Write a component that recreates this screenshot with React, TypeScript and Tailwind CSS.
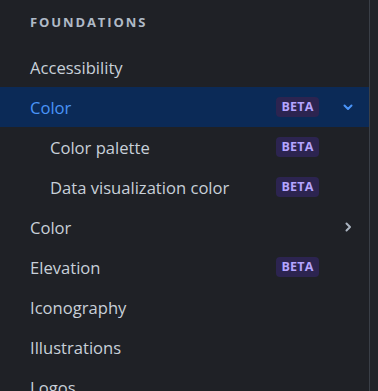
import React from "react";

const Beta = () => (
  <span className="inline-flex items-center justify-center h-[20px] w-[43px] rounded-[4px] bg-[#2c2450] text-[#b4a4ff] text-[12.5px] font-bold leading-none tracking-[0.2px]">
    BETA
  </span>
);

const ChevronDown = ({ color }: { color: string }) => (
  <svg width="12" height="12" viewBox="0 0 12 12" fill="none">
    <path d="M2.5 4.5 L6 8 L9.5 4.5" stroke={color} strokeWidth="2" strokeLinecap="round" strokeLinejoin="round" />
  </svg>
);

const ChevronRight = ({ color }: { color: string }) => (
  <svg width="12" height="12" viewBox="0 0 12 12" fill="none">
    <path d="M4.5 2.5 L8 6 L4.5 9.5" stroke={color} strokeWidth="2" strokeLinecap="round" strokeLinejoin="round" />
  </svg>
);

type Item = {
  label: string;
  beta?: boolean;
  indent?: boolean;
  selected?: boolean;
  chevron?: "down" | "right";
};

const items: Item[] = [
  { label: "Accessibility" },
  { label: "Color", beta: true, selected: true, chevron: "down" },
  { label: "Color palette", beta: true, indent: true },
  { label: "Data visualization color", beta: true, indent: true },
  { label: "Color", chevron: "right" },
  { label: "Elevation", beta: true },
  { label: "Iconography" },
  { label: "Illustrations" },
  { label: "Logos" },
];

export default function App() {
  return (
    <div
      className="w-[378px] h-[391px] overflow-hidden flex bg-[#1f2126]"
      style={{ fontFamily: "'Open Sans', 'Noto Sans', sans-serif" }}
    >
      <div className="w-[370px] shrink-0 border-r border-[#3a3f47] flex flex-col">
        <div className="pl-[30px] pt-[14px] pb-[17px] text-[13px] leading-[16px] font-bold tracking-[1.9px] text-[#b0bac6]">
          FOUNDATIONS
        </div>
        {items.map((it, i) => (
          <div
            key={i}
            className={`h-[40px] shrink-0 flex items-center pr-[15px] ${it.indent ? "pl-[50px]" : "pl-[30px]"} ${
              it.selected ? "bg-[#0b2a57] text-[#4a94f8]" : "text-[#c8d0d9]"
            }`}
          >
            <span className="flex-1 text-[16.6px] leading-[20px] pt-[2px] whitespace-nowrap">{it.label}</span>
            {it.beta && <Beta />}
            <span className="w-[12px] ml-[23px] flex items-center justify-center">
              {it.chevron === "down" && <ChevronDown color="#4a94f8" />}
              {it.chevron === "right" && <ChevronRight color="#aab4c0" />}
            </span>
          </div>
        ))}
      </div>
      <div className="flex-1 bg-[#22252a]" />
    </div>
  );
}
